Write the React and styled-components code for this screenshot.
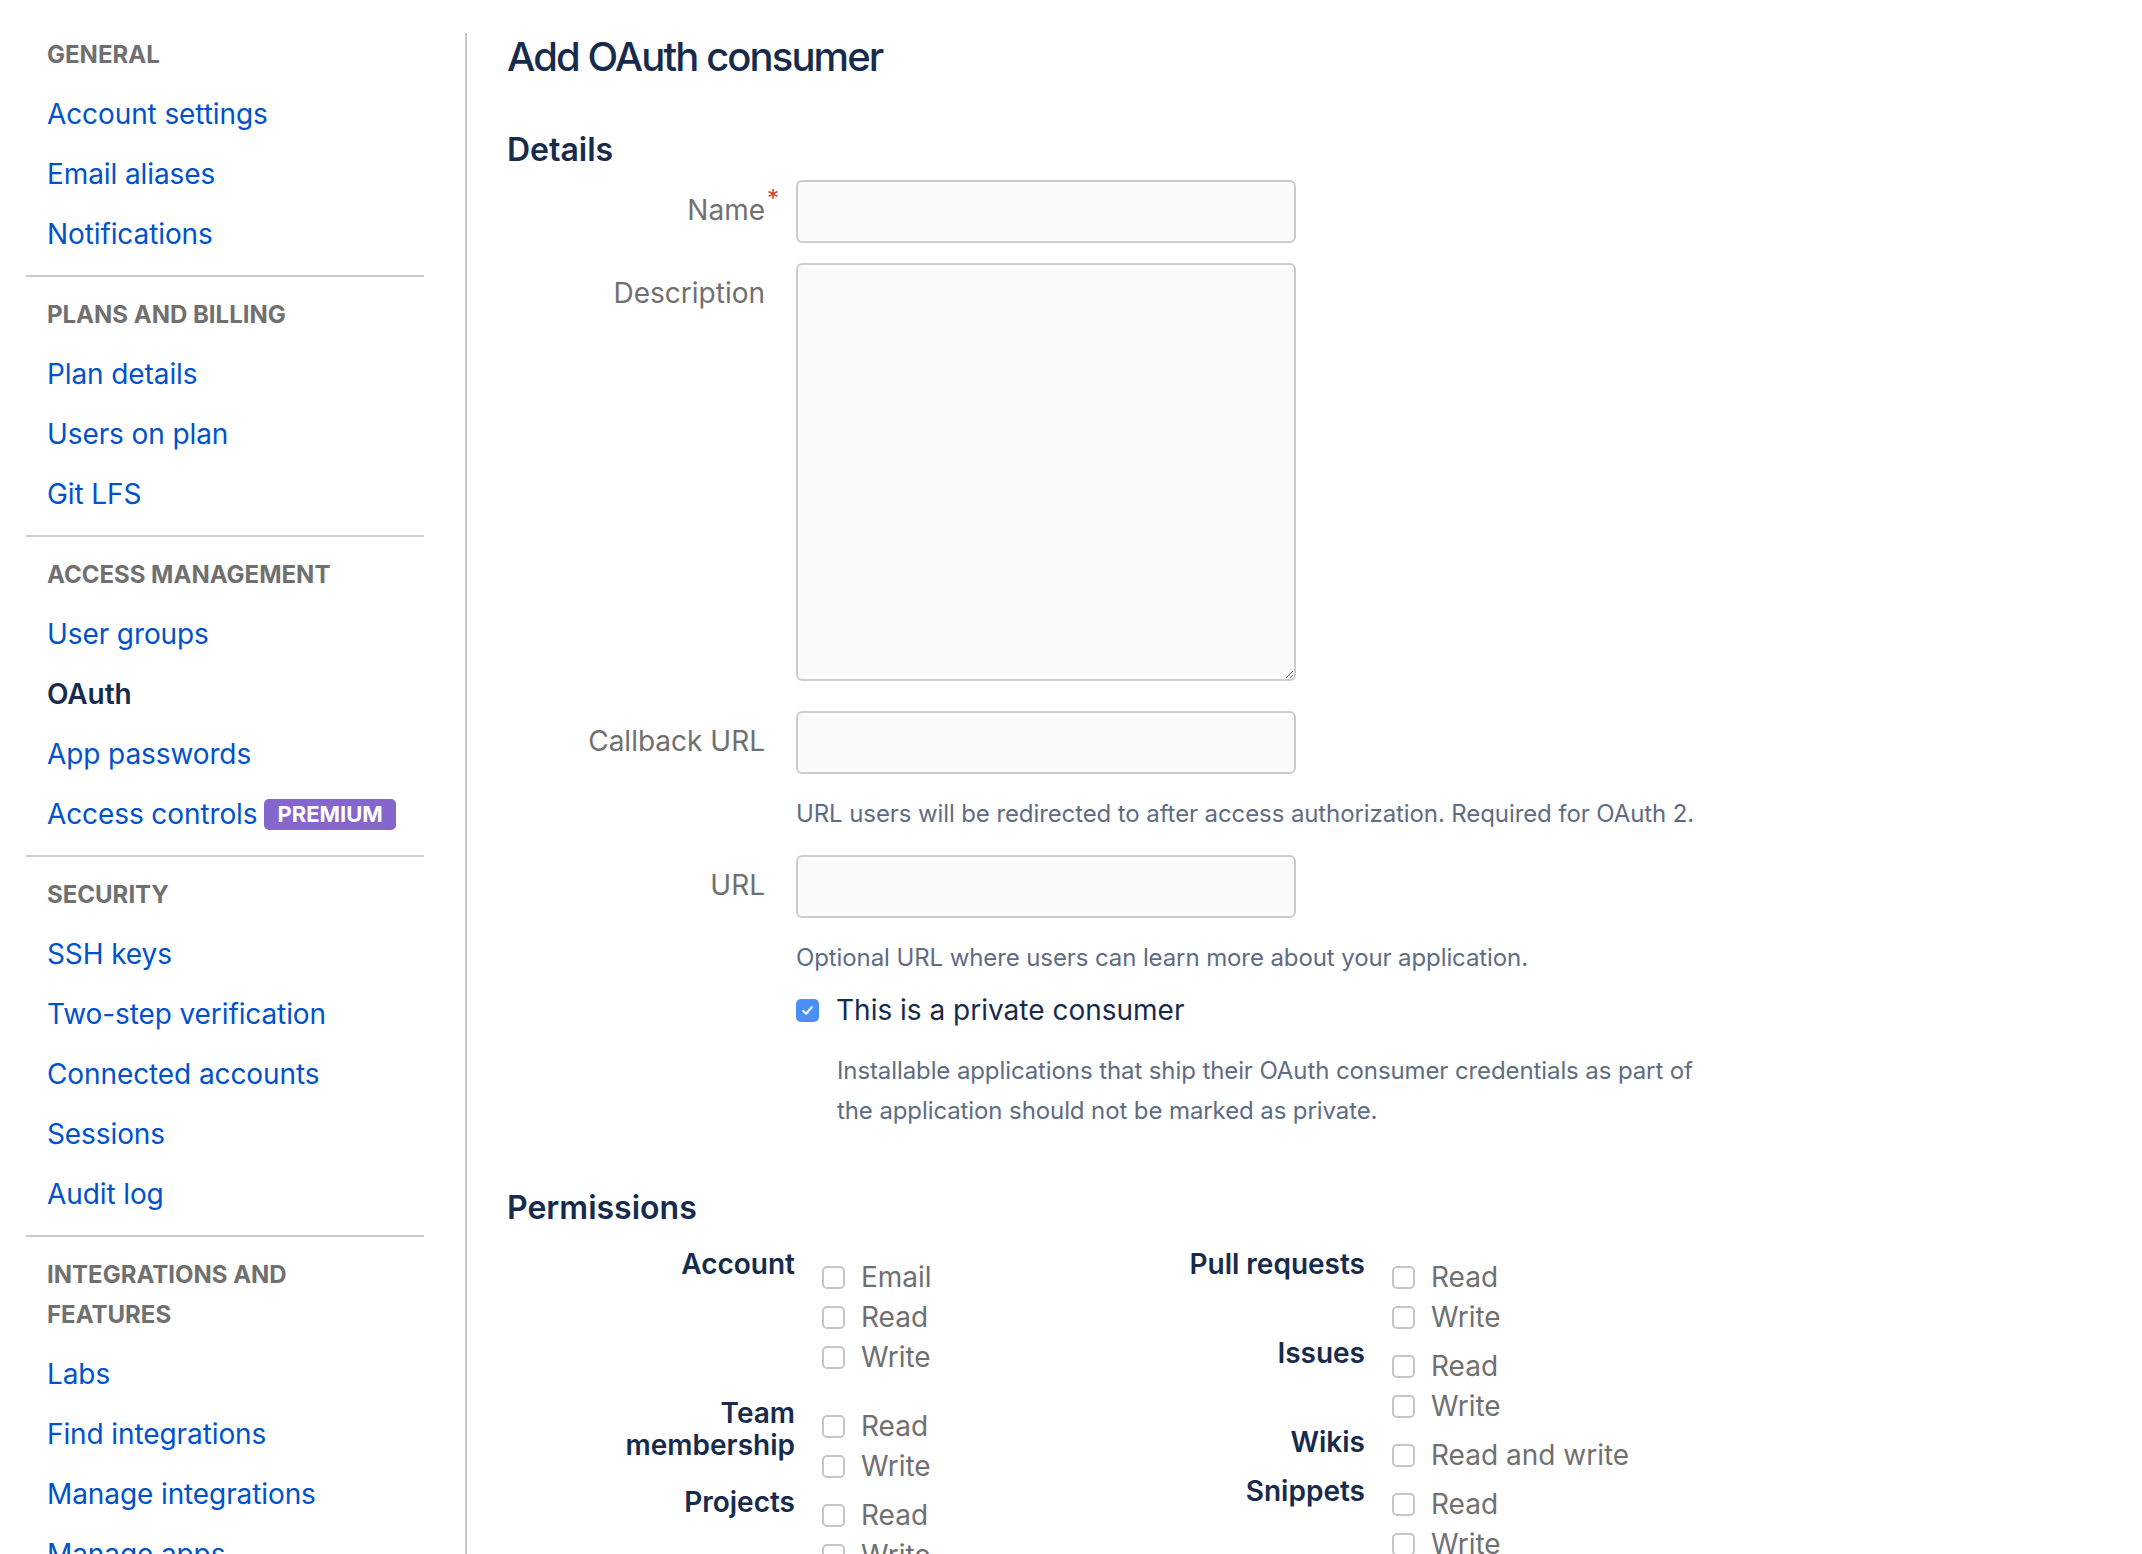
import React from "react";
import styled, { createGlobalStyle, css } from "styled-components";

const GlobalStyle = createGlobalStyle`
  html, body {
    margin: 0;
    padding: 0;
    background: #ffffff;
  }
  body {
    font-family: Inter, "Noto Sans", "Liberation Sans", sans-serif;
    color: #172b4d;
  }
  * {
    box-sizing: border-box;
  }
`;

// LAYOUT

const Page = styled.div`
  display: flex;
  align-items: stretch;
  padding-top: 33px;
  min-height: 1554px;
`;

const Sidebar = styled.aside`
  width: 467px;
  flex-shrink: 0;
  border-right: 2px solid #c9c9c9;
  padding: 0 41px 0 26px;
`;

const NavSection = styled.section`
  padding: ${(p) => (p.first ? "2px" : "18px")} 0 11px;
  border-bottom: ${(p) => (p.last ? "none" : "2px solid #cccccc")};
`;

const NavHeading = styled.h3`
  margin: 0 0 9px;
  padding-left: 21px;
  font-size: 24px;
  line-height: 40px;
  font-weight: 700;
  text-transform: uppercase;
  color: #707070;
`;

const NavLink = styled.a`
  display: block;
  padding-left: 21px;
  font-size: 28px;
  line-height: 60px;
  height: 60px;
  letter-spacing: -0.1px;
  text-decoration: none;
  white-space: nowrap;
  color: ${(p) => (p.active ? "#172b4d" : "#0052cc")};
  font-weight: ${(p) => (p.active ? 600 : 400)};
`;

const Badge = styled.span`
  display: inline-block;
  vertical-align: middle;
  margin-left: 7px;
  padding: 0 13px;
  height: 31px;
  line-height: 31px;
  border-radius: 5px;
  background: #8466cc;
  color: #ffffff;
  font-size: 22px;
  font-weight: 700;
  letter-spacing: 0;
  position: relative;
  top: -2px;
`;

const Main = styled.main`
  flex: 1;
  padding-left: 40px;
`;

const Title = styled.h1`
  margin: 0 0 49px;
  font-size: 40px;
  line-height: 48px;
  font-weight: 500;
  letter-spacing: -1.9px;
  color: #172b4d;
`;

const SectionTitle = styled.h2`
  margin: ${(p) => p.top || 0}px 0 ${(p) => p.bottom}px;
  font-size: 32px;
  line-height: 40px;
  font-weight: 600;
  color: #172b4d;
`;

// FORM

const FieldRow = styled.div`
  display: flex;
  align-items: flex-start;
  margin-bottom: ${(p) => p.gap || 0}px;
`;

const FieldLabel = styled.label`
  position: relative;
  width: 258px;
  flex-shrink: 0;
  margin-right: 31px;
  padding-top: 14px;
  text-align: right;
  font-size: 28px;
  line-height: 32px;
  color: #707070;
`;

const Required = styled.span`
  position: absolute;
  left: 100%;
  top: 7px;
  margin-left: 2px;
  font-size: 24px;
  line-height: 24px;
  color: #d04437;
`;

const FieldBody = styled.div`
  width: 920px;
`;

const fieldBox = css`
  display: block;
  width: 500px;
  border: 2px solid #cccccc;
  border-radius: 6px;
  background: #fafbfc;
  font-family: inherit;
  font-size: 28px;
  color: #172b4d;
  padding: 0 14px;
  outline: none;
`;

const TextInput = styled.input`
  ${fieldBox};
  height: 63px;
`;

const TextArea = styled.textarea`
  ${fieldBox};
  height: 418px;
  padding: 12px 14px;
  resize: vertical;
`;

const Help = styled.p`
  margin: ${(p) => p.top || 0}px 0 0;
  padding-left: ${(p) => p.indent || 0}px;
  font-size: 24px;
  line-height: 40px;
  letter-spacing: -0.1px;
  color: #5e6c84;
`;

const CheckRow = styled.label`
  display: flex;
  align-items: center;
  height: 40px;
  gap: ${(p) => p.gap || 16}px;
  margin-top: ${(p) => p.top || 0}px;
  font-size: 28px;
  white-space: nowrap;
  color: ${(p) => (p.dark ? "#172b4d" : "#707070")};
`;

const Box = styled.span`
  display: inline-flex;
  align-items: center;
  justify-content: center;
  width: 23px;
  height: 23px;
  flex-shrink: 0;
  border-radius: 5px;
  border: ${(p) => (p.checked ? "none" : "2px solid #c6c6c6")};
  background: ${(p) => (p.checked ? "#4a8ff5" : "#ffffff")};
`;

const Checkbox = ({ checked }) => (
  <Box checked={checked}>
    {checked && (
      <svg width="15" height="15" viewBox="0 0 16 16">
        <path
          d="M3.5 8.5 L6.5 11.5 L12.5 4.5"
          fill="none"
          stroke="#ffffff"
          strokeWidth="2.2"
          strokeLinecap="round"
          strokeLinejoin="round"
        />
      </svg>
    )}
  </Box>
);

// PERMISSIONS

const PermGrid = styled.div`
  display: grid;
  grid-template-columns: 570px 570px;
  align-items: start;
  margin-left: 88px;
`;

const PermColumn = styled.div`
  display: flex;
  flex-direction: column;
`;

const PermGroup = styled.div`
  display: flex;
  align-items: flex-start;
  margin-bottom: ${(p) => p.gap || 0}px;
`;

const PermLabel = styled.div`
  width: 200px;
  flex-shrink: 0;
  margin-right: 27px;
  text-align: right;
  font-size: 28px;
  line-height: 32px;
  font-weight: 600;
  color: #172b4d;
`;

const PermList = styled.div`
  display: flex;
  flex-direction: column;
  margin-top: 9px;
`;

const nav = [
  { title: "General", links: ["Account settings", "Email aliases", "Notifications"] },
  { title: "Plans and billing", links: ["Plan details", "Users on plan", "Git LFS"] },
  {
    title: "Access management",
    links: ["User groups", "OAuth", "App passwords", "Access controls"],
  },
  {
    title: "Security",
    links: ["SSH keys", "Two-step verification", "Connected accounts", "Sessions", "Audit log"],
  },
  {
    title: "Integrations and features",
    links: ["Labs", "Find integrations", "Manage integrations", "Manage apps", "Add-on settings"],
  },
];

const leftPerms = [
  { label: "Account", options: ["Email", "Read", "Write"], gap: 20 },
  { label: "Team membership", options: ["Read", "Write"] },
  { label: "Projects", options: ["Read", "Write"] },
  { label: "Repositories", options: ["Read", "Write", "Admin"] },
];

const rightPerms = [
  { label: "Pull requests", options: ["Read", "Write"] },
  { label: "Issues", options: ["Read", "Write"] },
  { label: "Wikis", options: ["Read and write"] },
  { label: "Snippets", options: ["Read", "Write"] },
  { label: "Webhooks", options: ["Read and write"] },
];

const PermColumnView = ({ groups }) => (
  <PermColumn>
    {groups.map((g) => (
      <PermGroup key={g.label} gap={g.gap}>
        <PermLabel>{g.label}</PermLabel>
        <PermList>
          {g.options.map((o) => (
            <CheckRow key={o}>
              <Checkbox />
              <span>{o}</span>
            </CheckRow>
          ))}
        </PermList>
      </PermGroup>
    ))}
  </PermColumn>
);

const App = () => {
  return (
    <>
      <GlobalStyle />
      <Page>
        <Sidebar>
          {nav.map((section, i) => (
            <NavSection key={section.title} first={i === 0} last={i === nav.length - 1}>
              <NavHeading>
                {section.title === "Integrations and features" ? (
                  <>
                    Integrations and
                    <br />
                    features
                  </>
                ) : (
                  section.title
                )}
              </NavHeading>
              {section.links.map((l) => (
                <NavLink key={l} href="#" active={l === "OAuth"}>
                  {l}
                  {l === "Access controls" && <Badge>PREMIUM</Badge>}
                </NavLink>
              ))}
            </NavSection>
          ))}
        </Sidebar>

        <Main>
          <Title>Add OAuth consumer</Title>
          <SectionTitle bottom={10}>Details</SectionTitle>

          <FieldRow gap={20}>
            <FieldLabel>
              Name<Required>*</Required>
            </FieldLabel>
            <FieldBody>
              <TextInput type="text" />
            </FieldBody>
          </FieldRow>

          <FieldRow gap={30}>
            <FieldLabel>Description</FieldLabel>
            <FieldBody>
              <TextArea />
            </FieldBody>
          </FieldRow>

          <FieldRow gap={21}>
            <FieldLabel>Callback URL</FieldLabel>
            <FieldBody>
              <TextInput type="text" />
              <Help top={20}>
                URL users will be redirected to after access authorization. Required for OAuth 2.
              </Help>
            </FieldBody>
          </FieldRow>

          <FieldRow>
            <FieldLabel>URL</FieldLabel>
            <FieldBody>
              <TextInput type="text" />
              <Help top={20}>Optional URL where users can learn more about your application.</Help>
              <CheckRow top={12} gap={17} dark>
                <Checkbox checked />
                <span>This is a private consumer</span>
              </CheckRow>
              <Help top={21} indent={41}>
                Installable applications that ship their OAuth consumer credentials as part of the
                application should not be marked as private.
              </Help>
            </FieldBody>
          </FieldRow>

          <SectionTitle top={57} bottom={20}>
            Permissions
          </SectionTitle>
          <PermGrid>
            <PermColumnView groups={leftPerms} />
            <PermColumnView groups={rightPerms} />
          </PermGrid>
        </Main>
      </Page>
    </>
  );
};

export default App;
